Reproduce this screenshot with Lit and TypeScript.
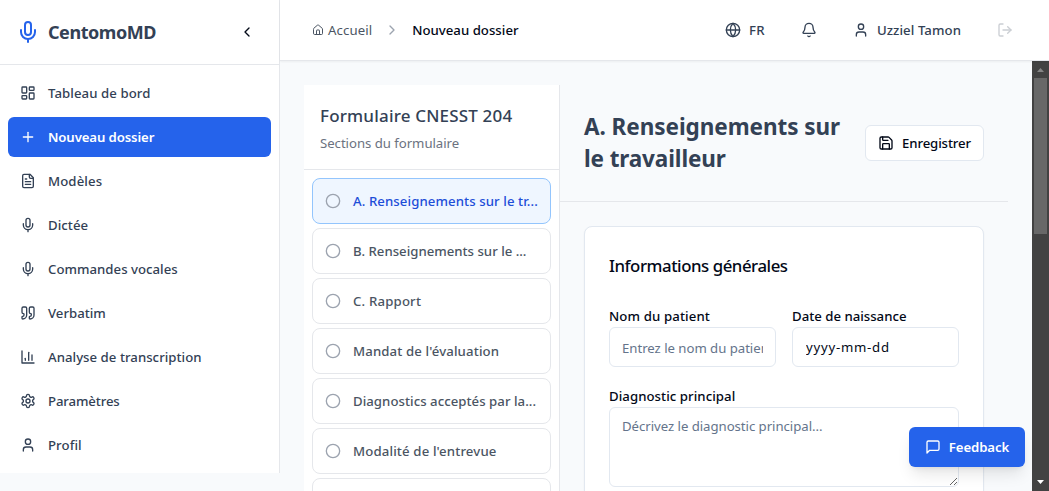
import { LitElement, html, css, svg } from "lit";
import { customElement, property } from "lit/decorators.js";
import { classMap } from "lit/directives/class-map.js";
import { styleMap } from "lit/directives/style-map.js";

const icons: Record<string, unknown> = {
  mic: svg`<path d="M12 2a3 3 0 0 0-3 3v7a3 3 0 0 0 6 0V5a3 3 0 0 0-3-3Z"/><path d="M19 10v2a7 7 0 0 1-14 0v-2"/><path d="M12 19v3"/>`,
  chevronLeft: svg`<path d="m15 18-6-6 6-6"/>`,
  chevronRight: svg`<path d="m9 18 6-6-6-6"/>`,
  dashboard: svg`<rect width="7" height="9" x="3" y="3" rx="1"/><rect width="7" height="5" x="14" y="3" rx="1"/><rect width="7" height="9" x="14" y="12" rx="1"/><rect width="7" height="5" x="3" y="16" rx="1"/>`,
  plus: svg`<path d="M5 12h14"/><path d="M12 5v14"/>`,
  file: svg`<path d="M15 2H6a2 2 0 0 0-2 2v16a2 2 0 0 0 2 2h12a2 2 0 0 0 2-2V7Z"/><path d="M14 2v4a2 2 0 0 0 2 2h4"/><path d="M10 9H8"/><path d="M16 13H8"/><path d="M16 17H8"/>`,
  quote: svg`<path d="M16 3a2 2 0 0 0-2 2v6a2 2 0 0 0 2 2 1 1 0 0 1 1 1v1a2 2 0 0 1-2 2 1 1 0 0 0-1 1v2a1 1 0 0 0 1 1 6 6 0 0 0 6-6V5a2 2 0 0 0-2-2z"/><path d="M5 3a2 2 0 0 0-2 2v6a2 2 0 0 0 2 2 1 1 0 0 1 1 1v1a2 2 0 0 1-2 2 1 1 0 0 0-1 1v2a1 1 0 0 0 1 1 6 6 0 0 0 6-6V5a2 2 0 0 0-2-2z"/>`,
  chart: svg`<path d="M3 3v18h18"/><path d="M18 17V9"/><path d="M13 17V5"/><path d="M8 17v-3"/>`,
  settings: svg`<path d="M12.22 2h-.44a2 2 0 0 0-2 2v.18a2 2 0 0 1-1 1.73l-.43.25a2 2 0 0 1-2 0l-.15-.08a2 2 0 0 0-2.73.73l-.22.38a2 2 0 0 0 .73 2.73l.15.1a2 2 0 0 1 1 1.72v.51a2 2 0 0 1-1 1.74l-.15.09a2 2 0 0 0-.73 2.73l.22.38a2 2 0 0 0 2.73.73l.15-.08a2 2 0 0 1 2 0l.43.25a2 2 0 0 1 1 1.73V20a2 2 0 0 0 2 2h.44a2 2 0 0 0 2-2v-.18a2 2 0 0 1 1-1.73l.43-.25a2 2 0 0 1 2 0l.15.08a2 2 0 0 0 2.73-.73l.22-.39a2 2 0 0 0-.73-2.73l-.15-.08a2 2 0 0 1-1-1.74v-.5a2 2 0 0 1 1-1.74l.15-.09a2 2 0 0 0 .73-2.73l-.22-.38a2 2 0 0 0-2.73-.73l-.15.08a2 2 0 0 1-2 0l-.43-.25a2 2 0 0 1-1-1.73V4a2 2 0 0 0-2-2z"/><circle cx="12" cy="12" r="3"/>`,
  user: svg`<path d="M19 21v-2a4 4 0 0 0-4-4H9a4 4 0 0 0-4 4v2"/><circle cx="12" cy="7" r="4"/>`,
  home: svg`<path d="M15 21v-8a1 1 0 0 0-1-1h-4a1 1 0 0 0-1 1v8"/><path d="M3 10a2 2 0 0 1 .709-1.528l7-5.999a2 2 0 0 1 2.582 0l7 5.999A2 2 0 0 1 21 10v9a2 2 0 0 1-2 2H5a2 2 0 0 1-2-2z"/>`,
  globe: svg`<circle cx="12" cy="12" r="10"/><path d="M12 2a14.5 14.5 0 0 0 0 20 14.5 14.5 0 0 0 0-20"/><path d="M2 12h20"/>`,
  bell: svg`<path d="M10.268 21a2 2 0 0 0 3.464 0"/><path d="M3.262 15.326A1 1 0 0 0 4 17h16a1 1 0 0 0 .74-1.673C19.41 13.956 18 12.499 18 8A6 6 0 0 0 6 8c0 4.499-1.411 5.956-2.738 7.326"/>`,
  logout: svg`<path d="M9 21H5a2 2 0 0 1-2-2V5a2 2 0 0 1 2-2h4"/><path d="m16 17 5-5-5-5"/><path d="M21 12H9"/>`,
  circle: svg`<circle cx="12" cy="12" r="10"/>`,
  save: svg`<path d="M15.2 3a2 2 0 0 1 1.4.6l3.8 3.8a2 2 0 0 1 .6 1.4V19a2 2 0 0 1-2 2H5a2 2 0 0 1-2-2V5a2 2 0 0 1 2-2z"/><path d="M17 21v-7a1 1 0 0 0-1-1H8a1 1 0 0 0-1 1v7"/><path d="M7 3v4a1 1 0 0 0 1 1h7"/>`,
  message: svg`<path d="M21 15a2 2 0 0 1-2 2H7l-4 4V5a2 2 0 0 1 2-2h14a2 2 0 0 1 2 2z"/>`,
};

@customElement("ui-icon")
class UiIcon extends LitElement {
  @property() name = "";
  @property({ type: Number }) size = 16;
  static styles = css`
    :host { display: block; flex: none; }
    svg { display: block; fill: none; stroke: currentColor; stroke-width: 2; stroke-linecap: round; stroke-linejoin: round; }
  `;
  render() {
    return html`<svg width=${this.size} height=${this.size} viewBox="0 0 24 24">${icons[this.name]}</svg>`;
  }
}

/* A run of text with its own tracking, in hundredths of a pixel. */
const t = (text: string, tracking = 0) =>
  html`<span style=${styleMap({ letterSpacing: `${tracking / 100}px` })}>${text}</span>`;

const nav: [string, string, number][] = [
  ["dashboard", "Tableau de bord", 7],
  ["plus", "Nouveau dossier", -12],
  ["file", "Modèles", 10],
  ["mic", "Dictée", 6],
  ["mic", "Commandes vocales", 2],
  ["quote", "Verbatim", 0],
  ["chart", "Analyse de transcription", 3],
  ["settings", "Paramètres", -12],
  ["user", "Profil", 8],
];

const sections: [string, number][] = [
  ["A. Renseignements sur le tr...", 9],
  ["B. Renseignements sur le ...", 0],
  ["C. Rapport", 18],
  ["Mandat de l'évaluation", 13],
  ["Diagnostics acceptés par la...", 4],
  ["Modalité de l'entrevue", 14],
];

@customElement("app-root")
class AppRoot extends LitElement {
  static styles = css`
    :host {
      display: flex; position: relative; width: 100%; height: 100vh; overflow: hidden;
      background: #f8fafc; color: #334155;
      font: 500 13.2px/20px "Noto Sans", "Open Sans", sans-serif;
    }
    * { box-sizing: border-box; }
    span { white-space: nowrap; }
    .sidebar { width: 280px; flex: none; align-self: flex-start; background: #fff; border-right: 1px solid #e5e7eb; }
    .brand { height: 65px; padding: 0 24px 0 16px; display: flex; align-items: center; border-bottom: 1px solid #e5e7eb; }
    .brand .logo { color: #2563eb; }
    .brand .name { flex: 1; margin-left: 8px; font-size: 18px; font-weight: 700; line-height: 28px; }
    .brand .toggle { color: #020817; }
    .nav { padding: 8px; display: flex; flex-direction: column; gap: 4px; }
    .link { height: 40px; padding: 0 12px; display: flex; align-items: center; gap: 12px; border-radius: 6px; }
    .link.active { background: #2563eb; color: #fff; font-weight: 600; }
    .content { flex: 1; min-width: 0; display: flex; flex-direction: column; }
    .topbar { height: 61px; flex: none; display: flex; align-items: center; background: #fff; border-bottom: 1px solid #e5e7eb; box-shadow: 0 1px 2px rgba(0,0,0,.05); padding: 0 36px 0 32px; z-index: 1; }
    .crumb { display: flex; align-items: center; gap: 4px; color: #4b5563; font-weight: 400; }
    .sep { color: #9ca3af; margin: 0 12px; }
    .here { color: #020817; flex: 1; }
    .tool { display: flex; align-items: center; gap: 8px; }
    .tool.bell { margin: 0 36px; }
    .tool.exit { margin-left: 36px; opacity: .25; }
    .scroller { flex: 1; min-height: 0; display: flex; }
    .page { flex: 1; min-width: 0; display: flex; padding: 24px 24px 0; }
    .outline { width: 256px; flex: none; background: #fff; border-right: 1px solid #e5e7eb; overflow: hidden; }
    .outline header { height: 85px; padding: 17px 16px 0; border-bottom: 1px solid #e5e7eb; }
    .outline h3 { margin: 0; font-size: 17px; font-weight: 500; line-height: 28px; }
    .outline p { margin: 3px 0 0; font-weight: 400; color: #6b7280; }
    .list { padding: 8px; display: flex; flex-direction: column; gap: 4px; }
    .item { height: 46px; flex: none; padding: 0 12px; display: flex; align-items: center; gap: 12px; border: 1px solid #e5e7eb; border-radius: 8px; color: #4b5563; }
    .item ui-icon { color: #9ca3af; }
    .item.active { background: #eff6ff; border-color: #93c5fd; color: #1d4ed8; }
    .form { flex: 1; min-width: 0; }
    .title { height: 117px; padding: 0 24px 1px; display: flex; align-items: center; justify-content: space-between; border-bottom: 1px solid #e5e7eb; }
    .title h1 { margin: 0; font-size: 22.5px; line-height: 32px; font-weight: 700; }
    .title h1 span { display: block; }
    .save { width: 119px; height: 36px; display: flex; align-items: center; justify-content: center; gap: 8px; background: #fff; border: 1px solid #e2e8f0; border-radius: 6px; color: #020817; }
    .card { margin: 24px 24px 0; height: 400px; padding: 24px; background: #fff; border: 1px solid #e2e8f0; border-radius: 8px; box-shadow: 0 1px 2px rgba(0,0,0,.05); color: #020817; }
    .card h2 { margin: 1px 0 26px; font-size: 16.8px; line-height: 28px; font-weight: 500; }
    .grid { display: grid; grid-template-columns: 1fr 1fr; gap: 19px 16px; }
    .field { display: flex; flex-direction: column; min-width: 0; }
    .field.wide { grid-column: span 2; }
    .field label { line-height: 20px; height: 21px; }
    input, textarea { display: block; width: 100%; margin: 0; border: 1px solid #e2e8f0; border-radius: 6px; background: #fff; padding: 8px 12px; font: 400 13.2px/20px "Noto Sans", sans-serif; color: #020817; outline: none; }
    input { height: 40px; padding-top: 9px; letter-spacing: -.03px; }
    textarea { height: 80px; letter-spacing: -.04px; }
    ::placeholder { color: #64748b; opacity: 1; }
    .date { letter-spacing: .75px; padding: 8px 12px 8px 13px; }
    .scrollbar { width: 17px; flex: none; background: #424242; display: flex; flex-direction: column; align-items: center; }
    .scrollbar svg { display: block; width: 17px; height: 17px; flex: none; }
    .thumb { width: 13px; height: 156px; background: #686868; }
    .space { flex: 1; }
    .feedback { position: absolute; right: 24px; bottom: 24px; width: 116px; height: 40px; display: flex; align-items: center; justify-content: center; gap: 8px; background: #2563eb; color: #fff; border-radius: 6px; font-weight: 600; box-shadow: 0 10px 15px -3px rgba(0,0,0,.1), 0 4px 6px -4px rgba(0,0,0,.1); z-index: 2; }
  `;
  render() {
    return html`
      <aside class="sidebar">
        <div class="brand">
          <ui-icon class="logo" name="mic" size="24"></ui-icon>
          <div class="name">${t("CentomoMD", -45)}</div>
          <ui-icon class="toggle" name="chevronLeft"></ui-icon>
        </div>
        <nav class="nav">
          ${nav.map(([icon, label, ls], i) => html`<div class=${classMap({ link: true, active: i === 1 })}><ui-icon name=${icon}></ui-icon>${t(label, ls)}</div>`)}
        </nav>
      </aside>
      <div class="content">
        <div class="topbar">
          <div class="crumb"><ui-icon name="home" size="12"></ui-icon>${t("Accueil", 10)}</div>
          <ui-icon class="sep" name="chevronRight"></ui-icon>
          <div class="here">${t("Nouveau dossier", 2)}</div>
          <div class="tool"><ui-icon name="globe"></ui-icon>${t("FR", 30)}</div>
          <div class="tool bell"><ui-icon name="bell"></ui-icon></div>
          <div class="tool"><ui-icon name="user"></ui-icon>${t("Uzziel Tamon", 8)}</div>
          <div class="tool exit"><ui-icon name="logout"></ui-icon></div>
        </div>
        <div class="scroller">
          <main class="page">
            <section class="outline">
              <header><h3>${t("Formulaire CNESST 204", 18)}</h3><p>${t("Sections du formulaire", -4)}</p></header>
              <div class="list">
                ${sections.map(([label, ls], i) => html`<div class=${classMap({ item: true, active: i === 0 })}><ui-icon name="circle"></ui-icon>${t(label, ls)}</div>`)}
                <div class="item"></div>
              </div>
            </section>
            <section class="form">
              <div class="title">
                <h1>${t("A. Renseignements sur", -5)}${t("le travailleur", -12)}</h1>
                <div class="save"><ui-icon name="save"></ui-icon>${t("Enregistrer", -12)}</div>
              </div>
              <div class="card">
                <h2>${t("Informations générales", -45)}</h2>
                <div class="grid">
                  <div class="field"><label>${t("Nom du patient", 12)}</label><input placeholder="Entrez le nom du patient"></div>
                  <div class="field"><label>${t("Date de naissance")}</label><input class="date" value="yyyy-mm-dd"></div>
                  <div class="field wide"><label>${t("Diagnostic principal", 6)}</label><textarea placeholder="Décrivez le diagnostic principal..."></textarea></div>
                </div>
              </div>
            </section>
          </main>
          <div class="scrollbar">
            <svg viewBox="0 0 17 17"><path fill="#868686" d="M5 11h7L8.5 7z"/></svg>
            <div class="thumb"></div>
            <div class="space"></div>
            <svg viewBox="0 0 17 17"><path fill="#fff" d="M5 6h7L8.5 10z"/></svg>
          </div>
        </div>
      </div>
      <div class="feedback"><ui-icon name="message"></ui-icon>${t("Feedback", -10)}</div>
    `;
  }
}
